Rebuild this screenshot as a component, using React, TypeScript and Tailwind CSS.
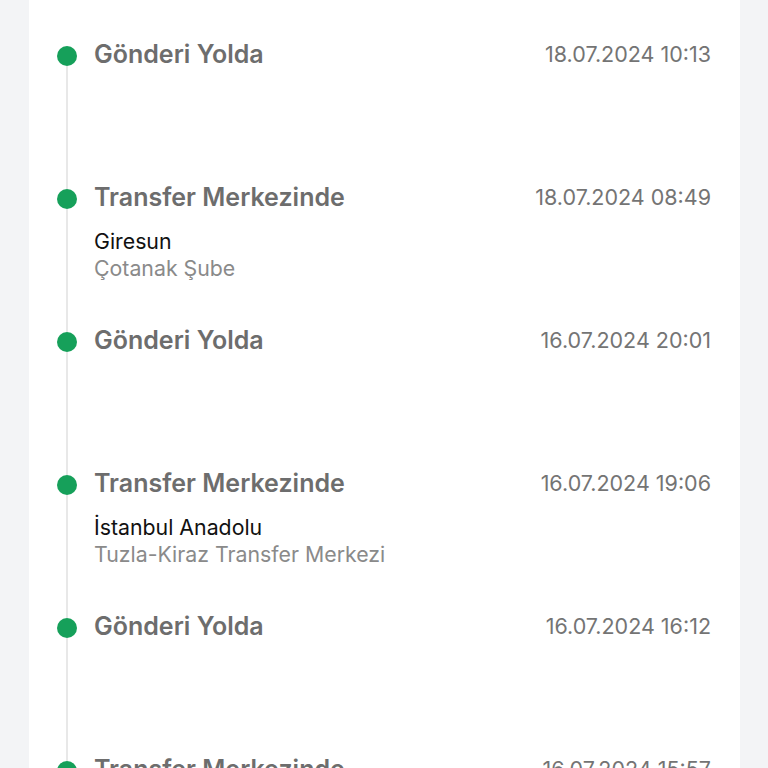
import React from "react";

type Item = { title: string; date: string; city?: string; branch?: string };

const items: Item[] = [
  { title: "Gönderi Yolda", date: "18.07.2024 10:13" },
  { title: "Transfer Merkezinde", date: "18.07.2024 08:49", city: "Giresun", branch: "Çotanak Şube" },
  { title: "Gönderi Yolda", date: "16.07.2024 20:01" },
  { title: "Transfer Merkezinde", date: "16.07.2024 19:06", city: "İstanbul Anadolu", branch: "Tuzla-Kiraz Transfer Merkezi" },
  { title: "Gönderi Yolda", date: "16.07.2024 16:12" },
  { title: "Transfer Merkezinde", date: "16.07.2024 15:57" },
];

export default function App() {
  return (
    <div
      className="w-[768px] h-[768px] overflow-hidden bg-[#f3f4f6] flex justify-center"
      style={{ fontFamily: "Inter, 'Noto Sans', sans-serif" }}
    >
      <div className="w-[711px] ml-[1px] bg-white pl-[28px] pr-[29px] flex flex-col">
        <div className="mt-[10px] h-[1px] bg-[#f0f0f0] w-[654px]" />
        <div className="flex flex-col">
          {items.map((it, i) => (
            <div key={i} className="flex h-[143px] shrink-0">
              <div className="w-[20px] flex flex-col items-center">
                <div className="h-[36px] w-[2px] bg-[#e8e8e8]" style={{ visibility: i === 0 ? "hidden" : "visible" }} />
                <div className="w-[20px] h-[20px] rounded-full bg-[#16a05a] shrink-0" />
                <div className="flex-1 w-[2px] bg-[#e8e8e8]" />
              </div>
              <div className="flex-1 pl-[17px] pt-[28px]">
                <div className="flex justify-between items-center h-[32px]">
                  <span className="text-[25px] leading-[32px] font-semibold text-[#6d6d6d]">{it.title}</span>
                  <span className="text-[21.5px] leading-[32px] text-[#747474]">{it.date}</span>
                </div>
                {it.city && (
                  <div className="mt-[15px]">
                    <div className="text-[21.3px] leading-[27px] text-[#111111]">{it.city}</div>
                    <div className="text-[21.3px] leading-[27px] text-[#8a8a8a]">{it.branch}</div>
                  </div>
                )}
              </div>
            </div>
          ))}
        </div>
      </div>
    </div>
  );
}
